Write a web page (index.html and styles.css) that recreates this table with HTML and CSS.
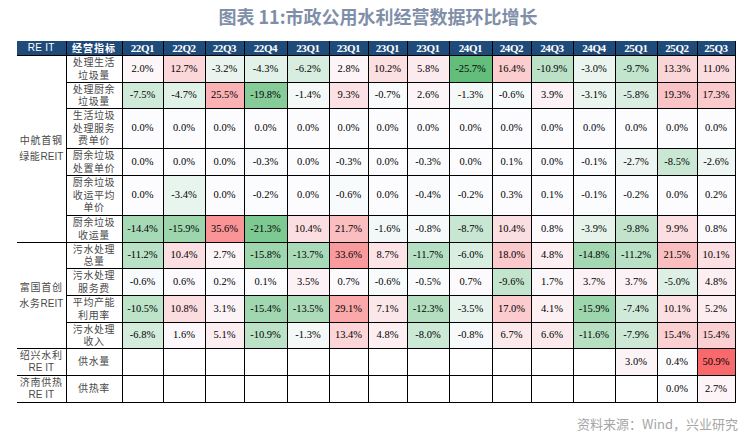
FILE: index.html
```html
<!DOCTYPE html>
<html lang="zh-CN">
<head>
<meta charset="utf-8">
<title>市政公用水利经营数据环比增长</title>
<link rel="stylesheet" href="styles.css">
</head>
<body>
<div class="page">
  <h1 class="title">图表 11:市政公用水利经营数据环比增长</h1>
  <table class="grid">
    <colgroup>
      <col class="c-reit"><col class="c-metric">
      <col class="w41"><col class="w42"><col class="w39"><col class="w43"><col class="w42"><col class="w39"><col class="w39"><col class="w42"><col class="w43"><col class="w39"><col class="w42"><col class="w42"><col class="w42"><col class="w40"><col class="w38">
    </colgroup>
    <thead>
      <tr class="hd">
        <th class="h-reit">RE IT</th><th class="h-metric">经营指标</th>
        <th>22Q1</th><th>22Q2</th><th>22Q3</th><th>22Q4</th><th>23Q1</th><th>23Q1</th><th>23Q1</th><th>23Q1</th><th>24Q1</th><th>24Q2</th><th>24Q3</th><th>24Q4</th><th>25Q1</th><th>25Q2</th><th>25Q3</th>
      </tr>
    </thead>
    <tbody>
      <tr class="r27">
        <td class="reit" rowspan="6">中航首钢<br>绿能<span class="lat">REIT</span></td>
        <td class="m">处理生活<br>垃圾量</td>
        <td class="v">2.0%</td><td class="v">12.7%</td><td class="v">-3.2%</td><td class="v">-4.3%</td><td class="v">-6.2%</td><td class="v">2.8%</td><td class="v">10.2%</td><td class="v">5.8%</td><td class="v">-25.7%</td><td class="v">16.4%</td><td class="v">-10.9%</td><td class="v">-3.0%</td><td class="v">-9.7%</td><td class="v">13.3%</td><td class="v">11.0%</td>
      </tr>
      <tr class="r26">
        <td class="m">处理厨余<br>垃圾量</td>
        <td class="v">-7.5%</td><td class="v">-4.7%</td><td class="v">25.5%</td><td class="v">-19.8%</td><td class="v">-1.4%</td><td class="v">9.3%</td><td class="v">-0.7%</td><td class="v">2.6%</td><td class="v">-1.3%</td><td class="v">-0.6%</td><td class="v">3.9%</td><td class="v">-3.1%</td><td class="v">-5.8%</td><td class="v">19.3%</td><td class="v">17.3%</td>
      </tr>
      <tr class="r40">
        <td class="m">生活垃圾<br>处理服务<br>费单价</td>
        <td class="v">0.0%</td><td class="v">0.0%</td><td class="v">0.0%</td><td class="v">0.0%</td><td class="v">0.0%</td><td class="v">0.0%</td><td class="v">0.0%</td><td class="v">0.0%</td><td class="v">0.0%</td><td class="v">0.0%</td><td class="v">0.0%</td><td class="v">0.0%</td><td class="v">0.0%</td><td class="v">0.0%</td><td class="v">0.0%</td>
      </tr>
      <tr class="r27">
        <td class="m">厨余垃圾<br>处置单价</td>
        <td class="v">0.0%</td><td class="v">0.0%</td><td class="v">0.0%</td><td class="v">-0.3%</td><td class="v">0.0%</td><td class="v">-0.3%</td><td class="v">0.0%</td><td class="v">-0.3%</td><td class="v">0.0%</td><td class="v">0.1%</td><td class="v">0.0%</td><td class="v">-0.1%</td><td class="v">-2.7%</td><td class="v">-8.5%</td><td class="v">-2.6%</td>
      </tr>
      <tr class="r40">
        <td class="m">厨余垃圾<br>收运平均<br>单价</td>
        <td class="v">0.0%</td><td class="v">-3.4%</td><td class="v">0.0%</td><td class="v">-0.2%</td><td class="v">0.0%</td><td class="v">-0.6%</td><td class="v">0.0%</td><td class="v">-0.4%</td><td class="v">-0.2%</td><td class="v">0.3%</td><td class="v">0.1%</td><td class="v">-0.1%</td><td class="v">-0.2%</td><td class="v">0.0%</td><td class="v">0.2%</td>
      </tr>
      <tr class="r27">
        <td class="m">厨余垃圾<br>收运量</td>
        <td class="v">-14.4%</td><td class="v">-15.9%</td><td class="v">35.6%</td><td class="v">-21.3%</td><td class="v">10.4%</td><td class="v">21.7%</td><td class="v">-1.6%</td><td class="v">-0.8%</td><td class="v">-8.7%</td><td class="v">10.4%</td><td class="v">0.8%</td><td class="v">-3.9%</td><td class="v">-9.8%</td><td class="v">9.9%</td><td class="v">0.8%</td>
      </tr>
      <tr class="r26">
        <td class="reit" rowspan="4">富国首创<br>水务<span class="lat">REIT</span></td>
        <td class="m">污水处理<br>总量</td>
        <td class="v">-11.2%</td><td class="v">10.4%</td><td class="v">2.7%</td><td class="v">-15.8%</td><td class="v">-13.7%</td><td class="v">33.6%</td><td class="v">8.7%</td><td class="v">-11.7%</td><td class="v">-6.0%</td><td class="v">18.0%</td><td class="v">4.8%</td><td class="v">-14.8%</td><td class="v">-11.2%</td><td class="v">21.5%</td><td class="v">10.1%</td>
      </tr>
      <tr class="r27">
        <td class="m">污水处理<br>服务费</td>
        <td class="v">-0.6%</td><td class="v">0.6%</td><td class="v">0.2%</td><td class="v">0.1%</td><td class="v">3.5%</td><td class="v">0.7%</td><td class="v">-0.6%</td><td class="v">-0.5%</td><td class="v">0.7%</td><td class="v">-9.6%</td><td class="v">1.7%</td><td class="v">3.7%</td><td class="v">3.7%</td><td class="v">-5.0%</td><td class="v">4.8%</td>
      </tr>
      <tr class="r27">
        <td class="m">平均产能<br>利用率</td>
        <td class="v">-10.5%</td><td class="v">10.8%</td><td class="v">3.1%</td><td class="v">-15.4%</td><td class="v">-13.5%</td><td class="v">29.1%</td><td class="v">7.1%</td><td class="v">-12.3%</td><td class="v">-3.5%</td><td class="v">17.0%</td><td class="v">4.1%</td><td class="v">-15.9%</td><td class="v">-7.4%</td><td class="v">10.1%</td><td class="v">5.2%</td>
      </tr>
      <tr class="r26">
        <td class="m">污水处理<br>收入</td>
        <td class="v">-6.8%</td><td class="v">1.6%</td><td class="v">5.1%</td><td class="v">-10.9%</td><td class="v">-1.3%</td><td class="v">13.4%</td><td class="v">4.8%</td><td class="v">-8.0%</td><td class="v">-0.8%</td><td class="v">6.7%</td><td class="v">6.6%</td><td class="v">-11.6%</td><td class="v">-7.9%</td><td class="v">15.4%</td><td class="v">15.4%</td>
      </tr>
      <tr class="r27">
        <td class="reit sm">绍兴水利<br><span class="lat">RE IT</span></td>
        <td class="m">供水量</td>
        <td class="v"></td><td class="v"></td><td class="v"></td><td class="v"></td><td class="v"></td><td class="v"></td><td class="v"></td><td class="v"></td><td class="v"></td><td class="v"></td><td class="v"></td><td class="v"></td><td class="v">3.0%</td><td class="v">0.4%</td><td class="v">50.9%</td>
      </tr>
      <tr class="r26">
        <td class="reit sm">济南供热<br><span class="lat">RE IT</span></td>
        <td class="m">供热率</td>
        <td class="v"></td><td class="v"></td><td class="v"></td><td class="v"></td><td class="v"></td><td class="v"></td><td class="v"></td><td class="v"></td><td class="v"></td><td class="v"></td><td class="v"></td><td class="v"></td><td class="v"></td><td class="v">0.0%</td><td class="v">2.7%</td>
      </tr>
    </tbody>
  </table>
  <p class="source">资料来源：Wind，兴业研究</p>
</div>
<script src="script.js"></script>
</body>
</html>
```

FILE: styles.css
```css
html, body {
  margin: 0;
  padding: 0;
  background: #ffffff;
}

.page {
  width: 756px;
  height: 432px;
  box-sizing: border-box;
  padding: 5px 0 0 17px;
  display: flex;
  flex-direction: column;
  align-items: flex-start;
  overflow: hidden;
}

.title {
  align-self: stretch;
  margin: 0 0 14px -17px;
  text-align: center;
  font-family: "Noto Sans CJK SC", "Noto Sans", sans-serif;
  font-size: 18px;
  line-height: 22px;
  font-weight: 700;
  color: #7f8fa9;
}

.grid {
  border-collapse: collapse;
  table-layout: fixed;
  width: 718px;
}

.c-reit { width: 49px; }
.c-metric { width: 56px; }
.w38 { width: 38px; }
.w39 { width: 39px; }
.w40 { width: 40px; }
.w41 { width: 41px; }
.w42 { width: 42px; }
.w43 { width: 43px; }

.grid th,
.grid td {
  border: 1px solid #000;
  padding: 0;
  text-align: center;
  vertical-align: middle;
  white-space: nowrap;
}

.hd {
  height: 14px;
}

.hd th {
  background: #1f4b7a;
  color: #ffffff;
  border-top: none;
  font-family: "Liberation Serif", "Times New Roman", serif;
  font-weight: 700;
  font-size: 11px;
  line-height: 12px;
  letter-spacing: -0.4px;
}

.hd .h-reit {
  border-left: none;
  font-family: "Liberation Sans", Arial, sans-serif;
  font-weight: 400;
  font-size: 10px;
  letter-spacing: 0.3px;
}

.hd .h-metric {
  font-family: "Noto Sans CJK SC", sans-serif;
  font-size: 10px;
  letter-spacing: 1px;
}

.r26 { height: 26px; }
.r27 { height: 27px; }
.r40 { height: 40px; }

.reit {
  border-left: none !important;
  font-family: "Noto Sans CJK SC", sans-serif;
  font-size: 10px;
  line-height: 16px;
  letter-spacing: 0.7px;
  color: #4a4a4a;
}

.reit.sm {
  line-height: 12.5px;
}

.lat {
  font-family: "Liberation Sans", Arial, sans-serif;
  letter-spacing: 0;
  font-size: 10px;
}

.m {
  font-family: "Noto Sans CJK SC", sans-serif;
  font-size: 10px;
  line-height: 12.5px;
  letter-spacing: 0.6px;
  color: #4a4a4a;
}

.v {
  font-family: "Liberation Serif", "Times New Roman", serif;
  font-size: 10.5px;
  line-height: 12px;
  color: #000;
  background: #ffffff;
}

.source {
  align-self: flex-end;
  margin: 13px 18px 0 0;
  font-family: "Noto Sans CJK SC", sans-serif;
  font-size: 13px;
  line-height: 16px;
  color: #a6a6a6;
}
```

FILE: script.js
```js
(function () {
  var min = -25.7, max = 50.9;
  var white = [252, 252, 255], green = [99, 190, 123], red = [248, 105, 107];
  var cells = document.querySelectorAll('td.v');
  cells.forEach(function (td) {
    var t = td.textContent.trim();
    if (!t) return;
    var v = parseFloat(t);
    var target, k;
    if (v < 0) { target = green; k = v / min; }
    else { target = red; k = v / max; }
    var c = white.map(function (x, i) { return Math.round(x + (target[i] - x) * k); });
    td.style.backgroundColor = 'rgb(' + c.join(',') + ')';
  });
})();
```
